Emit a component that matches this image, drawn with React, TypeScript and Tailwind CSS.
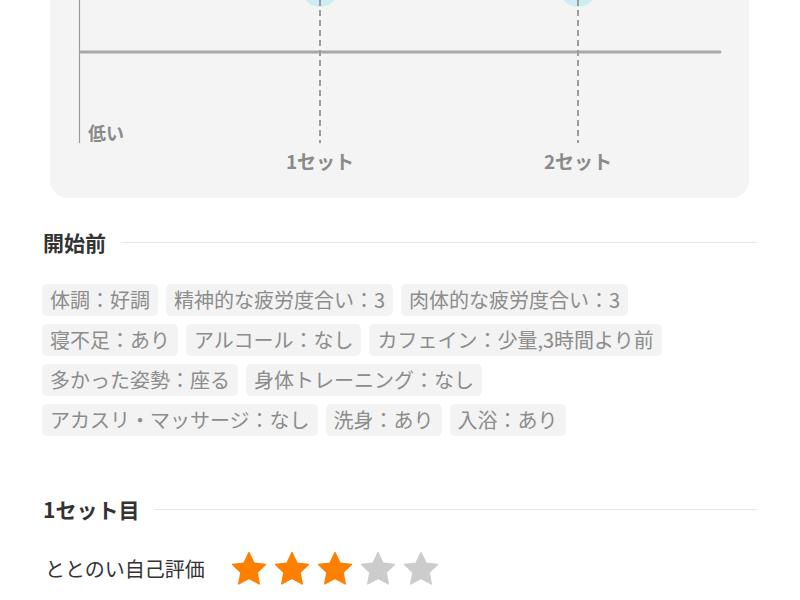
import React from "react";

const font = { fontFamily: '"Noto Sans CJK JP", "Noto Sans", sans-serif' };

const chipRows: string[] = [
  "体調：好調",
  "精神的な疲労度合い：3",
  "肉体的な疲労度合い：3",
  "寝不足：あり",
  "アルコール：なし",
  "カフェイン：少量,3時間より前",
  "多かった姿勢：座る",
  "身体トレーニング：なし",
  "アカスリ・マッサージ：なし",
  "洗身：あり",
  "入浴：あり",
];

function Star({ on }: { on: boolean }) {
  const c = on ? "#ff7f00" : "#cccccc";
  return (
    <svg width="34" height="34" viewBox="2 2 20 20">
      <path
        d="M12 2.3l2.95 6.2 6.75.85-4.95 4.7 1.3 6.75L12 17.5l-6.05 3.3 1.3-6.75L2.3 9.35l6.75-.85z"
        fill={c}
        stroke={c}
        strokeWidth="0.8"
        strokeLinejoin="round"
      />
    </svg>
  );
}

function SectionHeading({ title }: { title: string }) {
  return (
    <div className="flex items-center gap-[15px] h-[28px]">
      <span className="text-[21px] font-bold text-[#333333] leading-[28px]">{title}</span>
      <div className="flex-1 h-px bg-[#e8e8e8]" />
    </div>
  );
}

export default function App() {
  return (
    <div className="w-[800px] h-[600px] overflow-hidden bg-white" style={font}>
      <div className="pl-[50px] pr-[51px]">
        <div className="-mt-[100px] h-[298px] rounded-[18px] bg-[#f4f4f4] overflow-hidden">
          <svg width="699" height="298" viewBox="0 0 699 298">
            <line x1="29.5" y1="0" x2="29.5" y2="243" stroke="#9a9a9a" strokeWidth="1.2" />
            <line x1="31" y1="152" x2="670" y2="152" stroke="#a8a8a8" strokeWidth="3" strokeLinecap="round" />
            <circle cx="270" cy="88.5" r="18.5" fill="#cdeef1" />
            <circle cx="528" cy="88.5" r="18.5" fill="#cdeef1" />
            <line x1="270" y1="100" x2="270" y2="243" stroke="#9c9c9c" strokeWidth="2" strokeDasharray="6 4" />
            <line x1="528" y1="100" x2="528" y2="243" stroke="#9c9c9c" strokeWidth="2" strokeDasharray="6 4" />
            <text x="38" y="240" fontSize="18" fontWeight="700" fill="#8a8a8a">低い</text>
            <text x="270" y="269" fontSize="19" fontWeight="700" fill="#8a8a8a" textAnchor="middle">1セット</text>
            <text x="528" y="269" fontSize="19" fontWeight="700" fill="#8a8a8a" textAnchor="middle">2セット</text>
          </svg>
        </div>
      </div>

      <div className="pl-[43px] pr-[43px] mt-[30px]">
        <SectionHeading title="開始前" />
      </div>

      <div className="pl-[42px] pr-[43px] mt-[28px] flex flex-wrap gap-2">
        {chipRows.map((t) => (
          <span
            key={t}
            className="h-8 px-2 flex items-center rounded-[5px] bg-[#f3f3f3] text-[20px] leading-8 text-[#8c8c8c] whitespace-nowrap"
          >
            {t}
          </span>
        ))}
      </div>

      <div className="pl-[43px] pr-[43px] mt-[59px]">
        <SectionHeading title="1セット目" />
      </div>

      <div className="pl-[45px] mt-[29px] flex items-center h-[34px]">
        <span className="text-[20px] text-[#333333] leading-[34px] w-[187px]">ととのい自己評価</span>
        <div className="flex gap-[9px]">
          <Star on />
          <Star on />
          <Star on />
          <Star on={false} />
          <Star on={false} />
        </div>
      </div>
    </div>
  );
}
